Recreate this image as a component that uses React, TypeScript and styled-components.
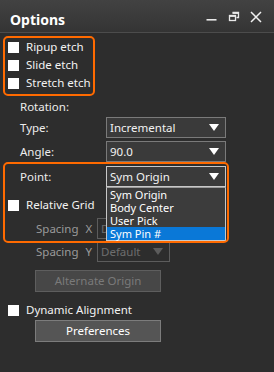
import React from 'react'
import styled, { createGlobalStyle } from 'styled-components'

const GlobalStyle = createGlobalStyle`
  html, body {
    margin: 0;
    padding: 0;
    background: #2d2d2d;
  }
  * {
    box-sizing: border-box;
  }
`

const pointOptions = ['Sym Origin', 'Body Center', 'User Pick', 'Sym Pin #']

export default function App() {
  return (
    <>
      <GlobalStyle />
      <Panel>
        <TitleBar>
          <Title>Options</Title>
          <TitleIcons>
            <svg width="12" height="12" viewBox="0 0 12 12">
              <rect x="0.5" y="8" width="10" height="1.6" fill="#e8e8e8" />
            </svg>
            <svg width="12" height="12" viewBox="0 0 12 12">
              <path d="M4.5 1.5h6v5h-2" fill="none" stroke="#e8e8e8" strokeWidth="1.3" />
              <rect x="1.5" y="4.5" width="6" height="5" fill="none" stroke="#e8e8e8" strokeWidth="1.3" />
              <rect x="1.5" y="4.5" width="6" height="1.4" fill="#e8e8e8" />
              <rect x="4.5" y="1.5" width="6" height="1.4" fill="#e8e8e8" />
            </svg>
            <svg width="12" height="12" viewBox="0 0 12 12">
              <path d="M1 1l10 10M11 1L1 11" stroke="#f0f0f0" strokeWidth="1.5" />
            </svg>
          </TitleIcons>
        </TitleBar>
        <Body>
          <CheckGroup>
            <CheckRow>
              <CheckBox />
              <span>Ripup etch</span>
            </CheckRow>
            <CheckRow>
              <CheckBox />
              <span>Slide etch</span>
            </CheckRow>
            <CheckRow>
              <CheckBox />
              <span>Stretch etch</span>
            </CheckRow>
            <Annotation $top={-2} $left={3} $width={92} $height={60} />
          </CheckGroup>

          <SectionLabel>Rotation:</SectionLabel>

          <FieldRow $mt={2}>
            <FieldLabel>Type:</FieldLabel>
            <Select $width={120}>
              <span>Incremental</span>
              <Arrow />
            </Select>
          </FieldRow>
          <FieldRow $mt={3}>
            <FieldLabel>Angle:</FieldLabel>
            <Select $width={120}>
              <span>90.0</span>
              <Arrow />
            </Select>
          </FieldRow>

          <PointBlock>
            <FieldRow $mt={4}>
              <FieldLabel>Point:</FieldLabel>
              <Select $width={120} $focused>
                <span>Sym Origin</span>
                <Arrow />
                <DropList>
                  {pointOptions.map((o, i) => (
                    <DropItem key={o} $active={i === pointOptions.length - 1}>
                      {o}
                    </DropItem>
                  ))}
                </DropList>
              </Select>
            </FieldRow>
            <CheckRow $mt={9}>
              <CheckBox />
              <span>Relative Grid</span>
            </CheckRow>
            <FieldRow $mt={4}>
              <SpacingLabel>
                Spacing<Axis>X</Axis>
              </SpacingLabel>
              <Select $width={73} $disabled>
                <span>Default</span>
                <Arrow $disabled />
              </Select>
            </FieldRow>
            <Annotation $top={0} $left={3} $width={226} $height={81} />
          </PointBlock>

          <FieldRow $mt={2}>
            <SpacingLabel>
              Spacing<Axis>Y</Axis>
            </SpacingLabel>
            <Select $width={73} $disabled>
              <span>Default</span>
              <Arrow $disabled />
            </Select>
          </FieldRow>

          <Button $disabled $mt={8}>Alternate Origin</Button>

          <CheckRow $mt={9}>
            <CheckBox />
            <span>Dynamic Alignment</span>
          </CheckRow>
          <Button $mt={1}>Preferences</Button>
        </Body>
      </Panel>
    </>
  )
}

const Panel = styled.div`
  width: 274px;
  height: 372px;
  background: #2d2d2d;
  font-family: 'Noto Sans', 'Open Sans', sans-serif;
  font-size: 11.5px;
  line-height: 16px;
  color: #f2f2f2;
  overflow: hidden;
`

const TitleBar = styled.div`
  height: 33px;
  display: flex;
  align-items: center;
  justify-content: space-between;
  padding: 2px 12px 0 10px;
  background: linear-gradient(#424242, #343434);
  border-bottom: 1px solid #4c4c4c;
`

const Title = styled.div`
  font-size: 14px;
  font-weight: 700;
  color: #ffffff;
  padding-top: 5px;
`

const TitleIcons = styled.div`
  display: flex;
  gap: 10px;
  align-items: center;
  svg {
    display: block;
  }
`

const Body = styled.div`
  display: flex;
  flex-direction: column;
  padding-top: 5px;
`

const CheckGroup = styled.div`
  position: relative;
  display: flex;
  flex-direction: column;
`

const CheckRow = styled.div<{ $mt?: number }>`
  display: flex;
  align-items: center;
  height: 18px;
  padding-left: 8px;
  gap: 7px;
  margin-top: ${(p) => p.$mt ?? 0}px;
  white-space: nowrap;
`

const CheckBox = styled.div`
  width: 11px;
  height: 11px;
  background: #ffffff;
  flex: none;
`

const SectionLabel = styled.div`
  padding-left: 20px;
  margin-top: 7px;
  height: 16px;
  color: #ececec;
`

const FieldRow = styled.div<{ $mt?: number }>`
  display: flex;
  align-items: center;
  height: 21px;
  margin-top: ${(p) => p.$mt ?? 0}px;
`

const FieldLabel = styled.div`
  width: 106px;
  padding-left: 20px;
  color: #ececec;
`

const Select = styled.div<{ $width: number; $focused?: boolean; $disabled?: boolean }>`
  position: relative;
  width: ${(p) => p.$width}px;
  height: 21px;
  display: flex;
  align-items: center;
  justify-content: space-between;
  padding: 0 6px 0 3px;
  background: ${(p) => (p.$disabled ? '#2d2d2d' : '#3a3a3a')};
  border: 1px solid ${(p) => (p.$focused ? '#c8c8c8' : p.$disabled ? '#5c5c5c' : '#7a7a7a')};
  color: ${(p) => (p.$disabled ? '#6e6e6e' : '#f2f2f2')};
`

const Arrow = styled.div<{ $disabled?: boolean }>`
  width: 0;
  height: 0;
  border-left: 5.5px solid transparent;
  border-right: 5.5px solid transparent;
  border-top: 7px solid ${(p) => (p.$disabled ? '#5c5c5c' : '#ffffff')};
`

const DropList = styled.div`
  position: absolute;
  top: 20px;
  left: -1px;
  width: 120px;
  background: #3c3c3c;
  border: 1px solid #c8c8c8;
  border-top-color: #9a9a9a;
  display: flex;
  flex-direction: column;
  z-index: 2;
`

const DropItem = styled.div<{ $active?: boolean }>`
  height: 13px;
  line-height: 13px;
  font-size: 11px;
  padding-left: 3px;
  color: #ffffff;
  background: ${(p) => (p.$active ? '#0a78d7' : 'transparent')};
`

const PointBlock = styled.div`
  position: relative;
  display: flex;
  flex-direction: column;
`

const SpacingLabel = styled.div`
  width: 97px;
  padding-left: 36px;
  color: #9a9a9a;
  white-space: nowrap;
`

const Axis = styled.span`
  margin-left: 7px;
`

const Button = styled.div<{ $disabled?: boolean; $mt?: number }>`
  margin-left: 35px;
  margin-top: ${(p) => p.$mt ?? 0}px;
  width: 126px;
  height: 22px;
  display: flex;
  align-items: center;
  justify-content: center;
  background: ${(p) => (p.$disabled ? '#474747' : '#555555')};
  border: 1px solid ${(p) => (p.$disabled ? '#5e5e5e' : '#7c7c7c')};
  color: ${(p) => (p.$disabled ? '#7a7a7a' : '#ffffff')};
`

const Annotation = styled.div<{ $top: number; $left: number; $width: number; $height: number }>`
  position: absolute;
  top: ${(p) => p.$top}px;
  left: ${(p) => p.$left}px;
  width: ${(p) => p.$width}px;
  height: ${(p) => p.$height}px;
  border: 2.5px solid #ff6a00;
  border-radius: 5px;
  pointer-events: none;
  z-index: 3;
`
